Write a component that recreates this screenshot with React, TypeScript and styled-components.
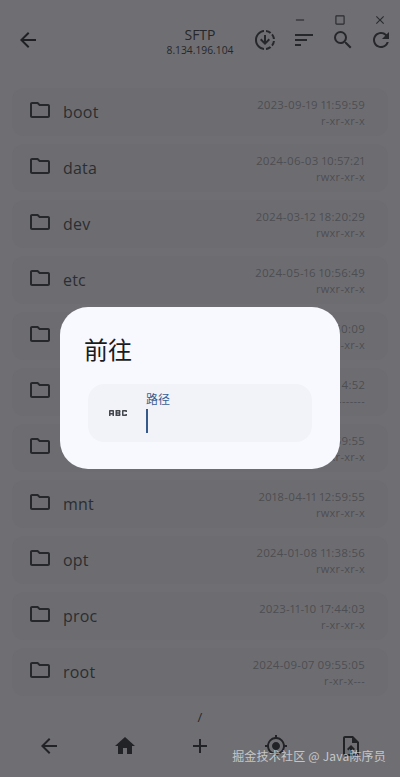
import React from "react";
import styled, { createGlobalStyle } from "styled-components";
import {
  MdAbc,
  MdAdd,
  MdArrowBack,
  MdClose,
  MdCropSquare,
  MdGpsFixed,
  MdHome,
  MdOutlineDownloading,
  MdOutlineFolder,
  MdOutlineUploadFile,
  MdRefresh,
  MdRemove,
  MdSearch,
  MdSort,
} from "react-icons/md";

const Global = createGlobalStyle`
  html, body { margin: 0; padding: 0; height: 100%; background: #6f6f73; }
  body { font-family: "Open Sans", "Noto Sans", "Noto Sans CJK SC", sans-serif; overflow: hidden; }
  * { box-sizing: border-box; }
`;

const Page = styled.div`
  position: relative;
  width: 400px;
  height: 777px;
  overflow: hidden;
  display: flex;
  flex-direction: column;
  background: #6f6f73;
  color: #1f2023;
`;

const AppBar = styled.header`
  height: 88px;
  padding: 0 0 8px;
  display: grid;
  grid-template-columns: 154px 1fr 154px;
  align-items: center;
`;

const BackSlot = styled.div`
  display: flex;
  align-items: center;
  padding-left: 16px;
  font-size: 24px;
`;

const TitleBlock = styled.div`
  display: flex;
  flex-direction: column;
  align-items: center;
`;

const Title = styled.div`
  font-size: 14px;
  line-height: 18px;
  margin-top: 3px;
  color: #26272a;
`;

const Subtitle = styled.div`
  font-size: 10.3px;
  line-height: 13px;
  white-space: nowrap;
  color: #26272a;
`;

const Actions = styled.div`
  display: grid;
  grid-template-columns: 38px 40px 38px 38px;
  justify-items: center;
  font-size: 24px;
  color: #26272a;
`;

const FileList = styled.ul`
  list-style: none;
  margin: 0;
  padding: 0 12px;
  display: flex;
  flex-direction: column;
  gap: 8px;
  flex: 1;
`;

const Row = styled.li`
  height: 48px;
  padding: 0 23px 0 16px;
  display: flex;
  align-items: center;
  gap: 11px;
  border-radius: 12px;
  background: #6d6d71;
`;

const FolderIcon = styled(MdOutlineFolder)`
  font-size: 24px;
  color: #26272b;
  flex: none;
  margin-top: -4px;
`;

const Name = styled.span`
  flex: 1;
  font-size: 16px;
  letter-spacing: 0.2px;
  color: #2c2d30;
`;

const Meta = styled.div`
  display: flex;
  flex-direction: column;
  align-items: flex-end;
  color: #4d4e52;
`;

const Stamp = styled.span`
  font-size: 11.5px;
  line-height: 16px;
  letter-spacing: 0.24px;
  font-variant-numeric: proportional-nums;
`;

const Perm = styled.span`
  font-size: 11px;
  line-height: 15px;
  letter-spacing: 0.3px;
`;

const PathLabel = styled.div`
  text-align: center;
  font-size: 13px;
  line-height: 16px;
  color: #26272a;
  margin-bottom: 5px;
`;

const BottomBar = styled.nav`
  height: 47px;
  padding: 0 37px 15px;
  display: flex;
  justify-content: space-between;
  align-items: center;
  font-size: 24px;
  color: #222326;
`;

const WindowControls = styled.div`
  position: absolute;
  top: 13px;
  right: 0;
  width: 120px;
  display: grid;
  grid-template-columns: repeat(3, 40px);
  justify-items: center;
  font-size: 14px;
  color: #2b2c2f;
`;

const Dialog = styled.section`
  position: absolute;
  left: 60px;
  top: 307px;
  width: 280px;
  height: 162px;
  padding: 23px 28px 0 24px;
  border-radius: 28px;
  background: #f8f9ff;
`;

const DialogTitle = styled.h2`
  margin: 0;
  font-size: 24px;
  font-weight: 400;
  line-height: 38px;
  color: #1a1c20;
  font-family: "Noto Sans CJK SC", sans-serif;
`;

const Field = styled.div`
  margin: 16px 0 0 4px;
  height: 58px;
  border-radius: 16px;
  background: #f2f3f9;
  display: flex;
  align-items: center;
`;

const FieldIcon = styled(MdAbc)`
  font-size: 24px;
  width: 24px;
  margin-left: 18px;
  margin-right: 16px;
  color: #44474e;
`;

const FieldBody = styled.div`
  display: flex;
  flex-direction: column;
  align-items: flex-start;
`;

const FieldLabel = styled.label`
  font-size: 12px;
  line-height: 16px;
  margin-top: -2px;
  margin-bottom: 2px;
  color: #3b6090;
  font-family: "Noto Sans CJK SC", sans-serif;
`;

const Caret = styled.div`
  width: 2px;
  height: 24px;
  background: #35598a;
`;

const Watermark = styled.div`
  position: absolute;
  right: 14px;
  bottom: 13px;
  font-size: 12px;
  line-height: 16px;
  letter-spacing: 0.2px;
  color: rgba(255, 255, 255, 0.62);
  font-family: "Noto Sans CJK SC", sans-serif;
`;

const rows = [
  ["boot", "2023-09-19 11:59:59", "r-xr-xr-x"],
  ["data", "2024-06-03 10:57:21", "rwxr-xr-x"],
  ["dev", "2024-03-12 18:20:29", "rwxr-xr-x"],
  ["etc", "2024-05-16 10:56:49", "rwxr-xr-x"],
  ["home", "2024-03-12 18:50:09", "rwxr-xr-x"],
  ["lib", "2024-03-12 18:14:52", "----------"],
  ["lost", "2024-09-07 09:59:55", "rwxr-xr-x"],
  ["mnt", "2018-04-11 12:59:55", "rwxr-xr-x"],
  ["opt", "2024-01-08 11:38:56", "rwxr-xr-x"],
  ["proc", "2023-11-10 17:44:03", "r-xr-xr-x"],
  ["root", "2024-09-07 09:55:05", "r-xr-x---"],
];

export default function App() {
  return (
    <Page>
      <Global />
      <AppBar>
        <BackSlot>
          <MdArrowBack />
        </BackSlot>
        <TitleBlock>
          <Title>SFTP</Title>
          <Subtitle>8.134.196.104</Subtitle>
        </TitleBlock>
        <Actions>
          <MdOutlineDownloading />
          <MdSort />
          <MdSearch />
          <MdRefresh />
        </Actions>
      </AppBar>
      <FileList>
        {rows.map(([name, stamp, perm]) => (
          <Row key={name}>
            <FolderIcon />
            <Name>{name}</Name>
            <Meta>
              <Stamp>{stamp}</Stamp>
              <Perm>{perm}</Perm>
            </Meta>
          </Row>
        ))}
      </FileList>
      <PathLabel>/</PathLabel>
      <BottomBar>
        <MdArrowBack />
        <MdHome />
        <MdAdd />
        <MdGpsFixed />
        <MdOutlineUploadFile />
      </BottomBar>
      <WindowControls>
        <MdRemove />
        <MdCropSquare />
        <MdClose />
      </WindowControls>
      <Dialog>
        <DialogTitle>前往</DialogTitle>
        <Field>
          <FieldIcon />
          <FieldBody>
            <FieldLabel>路径</FieldLabel>
            <Caret />
          </FieldBody>
        </Field>
      </Dialog>
      <Watermark>掘金技术社区 @ Java陈序员</Watermark>
    </Page>
  );
}
